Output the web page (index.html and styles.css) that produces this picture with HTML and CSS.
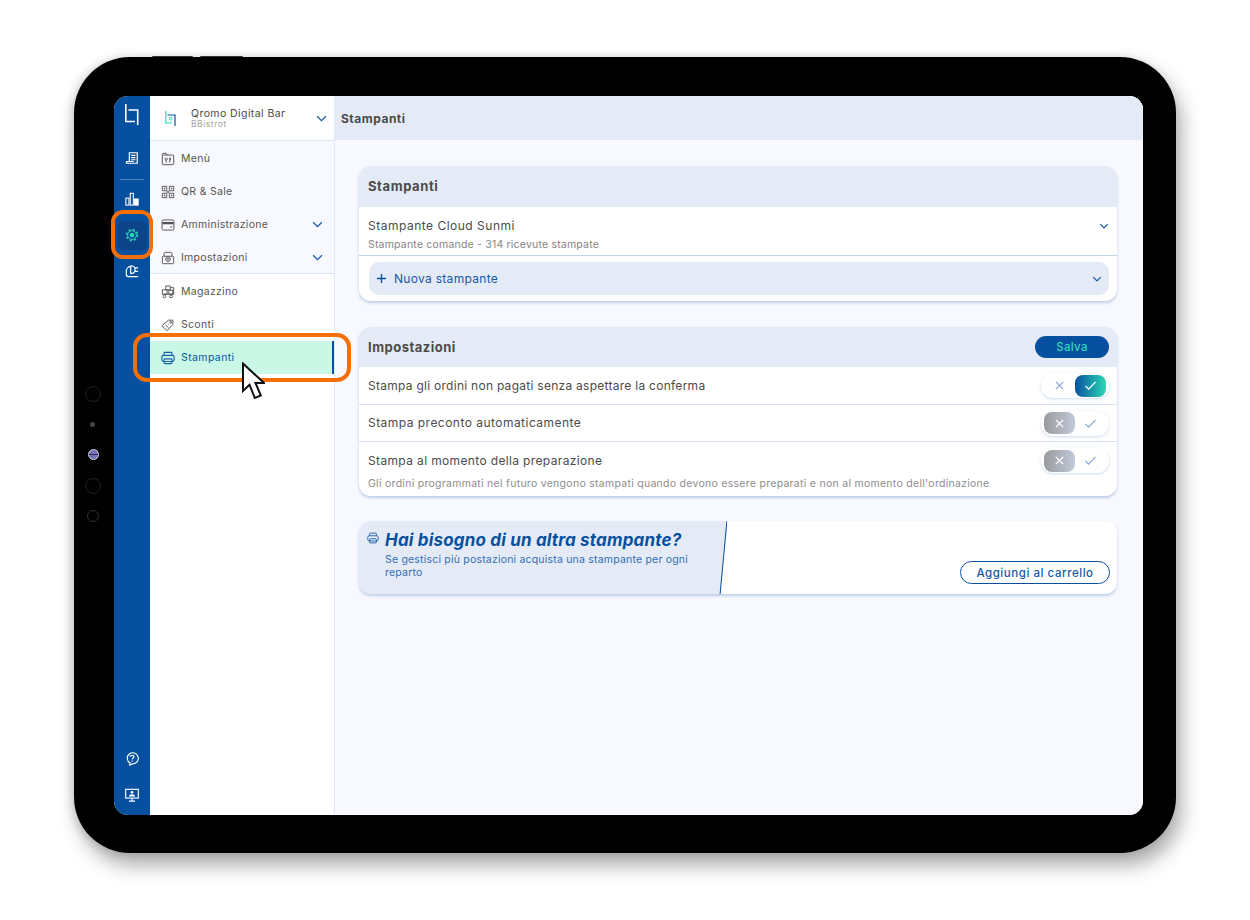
FILE: index.html
```html
<!DOCTYPE html>
<html lang="it">
<head>
<meta charset="utf-8">
<title>Stampanti</title>
<link rel="stylesheet" href="styles.css">
</head>
<body>
<div class="stage">
  <div class="device">
    <span class="hw-btn hw-btn-a"></span>
    <span class="hw-btn hw-btn-b"></span>
    <span class="lens lens-a"></span>
    <span class="lens lens-b"></span>
    <span class="lens lens-c"></span>
    <span class="lens lens-d"></span>
    <span class="lens lens-e"></span>

    <div class="screen">
      <aside class="rail">
        <div class="rail-item">
          <svg class="rail-logo" viewBox="0 0 14 21" fill="none" stroke="#fff" stroke-width="1.600"><path d="M.8 0v17.500H10"/><path d="M3.500 6h9.200v15"/></svg>
        </div>
        <div class="rail-item">
          <svg class="rail-ic" viewBox="0 0 16 16" fill="none" stroke="#fff" stroke-width="1.400"><path d="M5 12V2h9v12H2.500c-1.300 0-1.300-2 0-2H10"/><path d="M7 5h5M7 7.500h5M7 10h5"/></svg>
        </div>
        <div class="rail-sep"></div>
        <div class="rail-item">
          <svg class="rail-ic" viewBox="0 0 16 16" fill="none" stroke="#fff" stroke-width="1.200"><rect x="1" y="7" width="3.500" height="8"/><rect x="6" y="1.500" width="3.500" height="13.500"/><rect x="11" y="8" width="4" height="7" fill="#fff"/></svg>
        </div>
        <div class="rail-item">
          <span class="rail-active">
            <svg class="rail-ic" viewBox="0 0 16 16" fill="none" stroke="#2ad9b5"><circle cx="8" cy="8" r="5" stroke-width="1.100"/><circle cx="8" cy="8" r="6.300" stroke-width="1.600" stroke-dasharray="2.400 2.550"/><circle cx="8" cy="8" r="2.600" fill="#2ad9b5" stroke="none"/></svg>
          </span>
        </div>
        <div class="rail-item">
          <svg class="rail-ic" viewBox="0 0 16 16" fill="none" stroke="#fff" stroke-width="1.400"><path d="M6.500 2.800A5.500 5.500 0 0 0 1.500 8.500V12c0 1.300.8 2.300 2.200 2.300H15"/><path d="M6.500 2v9M6.500 2c3.500 0 5 1.800 5 4.500S10 11 6.500 11M11.500 4.500H15M11.500 8.500H15"/></svg>
        </div>
        <div class="rail-item rail-push">
          <svg class="rail-ic" viewBox="0 0 16 16" fill="none" stroke="#fff" stroke-width="1.300"><path d="M5.500 15l.3-2.300A6.300 6.300 0 1 1 8.500 13.500z"/><path d="M6 5.500C6 3.300 10.200 3.300 10.200 5.500c0 1.700-2.100 1.500-2.100 3.200M8.100 9.800v1.200"/></svg>
        </div>
        <div class="rail-item">
          <svg class="rail-ic" viewBox="0 0 16 16" fill="none" stroke="#fff" stroke-width="1.300"><rect x=".8" y="1.500" width="14.400" height="10"/><path d="M4.500 15h7M8 11.500V15"/><circle cx="8" cy="4.800" r="1.500" fill="#fff" stroke="none"/><path d="M4.500 9.800c0-3.600 7-3.600 7 0z" fill="#fff" stroke="none"/></svg>
        </div>
      </aside>

      <nav class="nav">
        <div class="nav-head">
          <svg class="nav-logo" viewBox="0 0 11 15" fill="none" stroke-width="1.200"><path d="M.8 0v12h6" stroke="#2ad9b5"/><path d="M2.500 4h7.500v11" stroke="#0a4fa0"/><path d="M4.500 6.500h2.500V9H4.500z" stroke="#2ad9b5" stroke-width=".8"/></svg>
          <div class="nav-head-text">
            <div class="venue">Qromo Digital Bar</div>
            <div class="venue-sub">BBistrot</div>
          </div>
          <svg class="chev chev-head" viewBox="0 0 12 8"><path d="M1 1.500l5 5 5-5"/></svg>
        </div>

        <div class="nav-group">
          <div class="nav-item">
            <svg class="nav-ic" viewBox="0 0 16 16"><path d="M2.500 3.500h11c.6 0 1 .4 1 1v9c0 .6-.4 1-1 1h-11c-.6 0-1-.4-1-1v-11c0-.6.400-1 1-1H6l1 2"/><path d="M4.800 6.500v2c0 1 2.200 1 2.200 0v-2M5.900 9v3M10 6.500V12M10 6.500c1.500.5 1.500 2.500 0 3"/></svg>
            <span>Menù</span>
          </div>
          <div class="nav-item">
            <svg class="nav-ic" viewBox="0 0 16 16"><path d="M1.500 1.500h5v5h-5zM9.500 1.500h5v5h-5zM1.500 9.500h5v5h-5zM9.500 9.500h5v5h-5z"/><path class="ic-thick" d="M3.300 4h1.500M11.300 4h1.500M3.300 12h1.500M11.300 12h1.500M6.500 8h3"/></svg>
            <span>QR &amp; Sale</span>
          </div>
          <div class="nav-item">
            <svg class="nav-ic" viewBox="0 0 16 16"><rect x="1.200" y="2.200" width="13.600" height="11.600" rx="1.500"/><path class="ic-wide" d="M1.500 5.800h13"/><path d="M10.500 10.300h2.500"/></svg>
            <span>Amministrazione</span>
            <svg class="chev chev-item" viewBox="0 0 12 8"><path d="M1 1.500l5 5 5-5"/></svg>
          </div>
          <div class="nav-item">
            <svg class="nav-ic" viewBox="0 0 16 16"><path d="M2.500 6h11c.6 0 1 .4 1 1v6.500c0 .6-.4 1-1 1h-11c-.6 0-1-.4-1-1V7c0-.6.4-1 1-1z"/><path d="M3.500 6V3c0-.8.5-1.500 1.500-1.500h6c1 0 1.500.7 1.500 1.500v3"/><path d="M8 6.500l2.500 1.500v2.700L8 12.300 5.500 10.700V8z"/><circle cx="8" cy="9.400" r=".8"/></svg>
            <span>Impostazioni</span>
            <svg class="chev chev-item" viewBox="0 0 12 8"><path d="M1 1.500l5 5 5-5"/></svg>
          </div>
        </div>

        <div class="nav-group-sub">
          <div class="nav-item">
            <svg class="nav-ic" viewBox="0 0 16 16"><rect x="1.500" y="5.500" width="5.500" height="5"/><rect x="5.500" y="1.200" width="5" height="4.300"/><path d="M10.500 3h4v7.500H3"/><rect x="9" y="6" width="4.500" height="4.500"/><circle cx="4" cy="13" r="1.600"/><circle cx="11.500" cy="13" r="1.600"/></svg>
            <span>Magazzino</span>
          </div>
          <div class="nav-item">
            <svg class="nav-ic" viewBox="0 0 16 16"><path d="M8.500 2.500h5V7.500L7 14.500 1 8.800z"/><circle cx="11" cy="5" r="1"/><path d="M5 8l3.500 3M7.500 6.500l1 1"/></svg>
            <span>Sconti</span>
          </div>
          <div class="nav-item nav-item-on">
            <svg class="nav-ic nav-ic-on" viewBox="0 0 16 16"><path d="M3.500 5V2.500c0-.6.4-1 1-1h7c.6 0 1 .4 1 1V5"/><rect x="1" y="5" width="14" height="7" rx="2.200"/><rect x="3.500" y="9" width="9" height="5.500" rx="1"/></svg>
            <span>Stampanti</span>
          </div>
        </div>
      </nav>

      <main class="main">
        <header class="topbar">Stampanti</header>
        <div class="content">
          <section class="card">
            <div class="card-head">Stampanti</div>
            <div class="printer-row">
              <div>
                <div class="row-title printer-name">Stampante Cloud Sunmi</div>
                <div class="row-sub">Stampante comande - 314 ricevute stampate</div>
              </div>
              <svg class="chev chev-row" viewBox="0 0 12 8"><path d="M1 1.500l5 5 5-5"/></svg>
            </div>
            <div class="new-wrap">
              <div class="new-bar">
                <svg class="plus" viewBox="0 0 12 12"><path d="M6 1v10M1 6h10"/></svg>
                <span>Nuova stampante</span>
                <svg class="chev chev-new" viewBox="0 0 12 8"><path d="M1 1.500l5 5 5-5"/></svg>
              </div>
            </div>
          </section>

          <section class="card">
            <div class="card-head card-head-set">
              <span>Impostazioni</span>
              <button class="save">Salva</button>
            </div>
            <div class="set-row set-row-a">
              <span class="row-title">Stampa gli ordini non pagati senza aspettare la conferma</span>
              <div class="toggle toggle-on">
                <span class="tg tg-x"><svg viewBox="0 0 12 12"><path d="M2 2l8 8M10 2l-8 8"/></svg></span>
                <span class="tg tg-v"><svg viewBox="0 0 14 12"><path d="M1.500 6.500L5 10l7.500-8"/></svg></span>
              </div>
            </div>
            <div class="set-row set-row-b">
              <span class="row-title">Stampa preconto automaticamente</span>
              <div class="toggle toggle-off">
                <span class="tg tg-x"><svg viewBox="0 0 12 12"><path d="M2 2l8 8M10 2l-8 8"/></svg></span>
                <span class="tg tg-v"><svg viewBox="0 0 14 12"><path d="M1.500 6.500L5 10l7.500-8"/></svg></span>
              </div>
            </div>
            <div class="set-row-c">
              <div class="set-row-c-top">
                <span class="row-title">Stampa al momento della preparazione</span>
                <div class="toggle toggle-off">
                  <span class="tg tg-x"><svg viewBox="0 0 12 12"><path d="M2 2l8 8M10 2l-8 8"/></svg></span>
                  <span class="tg tg-v"><svg viewBox="0 0 14 12"><path d="M1.500 6.500L5 10l7.500-8"/></svg></span>
                </div>
              </div>
              <div class="row-note">Gli ordini programmati nel futuro vengono stampati quando devono essere preparati e non al momento dell'ordinazione</div>
            </div>
          </section>

          <section class="card promo">
            <div class="promo-left">
              <svg class="promo-ic" viewBox="0 0 16 16"><path d="M3.500 5V2.500c0-.6.4-1 1-1h7c.6 0 1 .4 1 1V5"/><rect x="1" y="5" width="14" height="7" rx="2.200"/><rect x="3.500" y="9" width="9" height="5.500" rx="1"/></svg>
              <div class="promo-text">
                <div class="promo-title">Hai bisogno di un altra stampante?</div>
                <div class="promo-sub">Se gestisci più postazioni acquista una stampante per ogni reparto</div>
              </div>
            </div>
            <button class="cart">Aggiungi al carrello</button>
          </section>
        </div>
      </main>
    </div>

    <span class="mark mark-rail"></span>
    <span class="mark mark-item"></span>
    <svg class="cursor" viewBox="0 0 24 38"><path d="M2 1.500V29l6.500-6.300L13.800 36l6-2.500-5.300-12.500h8.500z"/></svg>
  </div>
</div>
</body>
</html>
```
FILE: styles.css
```css
* { box-sizing: border-box; }
html, body { margin: 0; height: 100%; background: #fff; }
body { font-family: Inter, "Noto Sans", sans-serif; color: #4b4b4b; }

.stage { padding: 57px 74px; width: 1250px; height: 920px; overflow: hidden; }

.device {
  position: relative;
  width: 1102px;
  height: 796px;
  padding: 39px 33px 38px 40px;
  background: #000;
  border-radius: 56px;
  box-shadow: 5px 12px 20px rgba(0,0,0,.34), -3px 0 8px rgba(0,0,0,.12);
}
.hw-btn { position: absolute; top: -1px; height: 1px; background: #333; border-radius: 1px 1px 0 0; }
.hw-btn-a { left: 78px; width: 41px; }
.hw-btn-b { left: 126px; width: 43px; }

.lens { position: absolute; border-radius: 50%; border: 1px solid #222; }
.lens-a { top: 329px; left: 11px; width: 16px; height: 16px; }
.lens-b { top: 365px; left: 16px; width: 5px; height: 5px; background: #444; border: 0; }
.lens-c { top: 392px; left: 14px; width: 11px; height: 11px; background: linear-gradient(#7572b8 45%, #2c2a52 45%, #2c2a52 60%, #7572b8 60%); border: 1px solid #d5d5e0; }
.lens-d { top: 421px; left: 11px; width: 16px; height: 16px; }
.lens-e { top: 453px; left: 13px; width: 12px; height: 12px; border-color: #333; }

.screen {
  display: flex;
  width: 1029px;
  height: 719px;
  border-radius: 14px;
  overflow: hidden;
  background: #fff;
}

/* rail */
.rail { display: flex; flex-direction: column; width: 36px; padding-bottom: 2px; background: #07509f; flex: none; }
.rail-item { display: flex; align-items: center; justify-content: center; height: 36px; flex: none; }
.rail-item:first-child { height: 44px; padding-bottom: 8px; }
.rail-sep { height: 1px; margin: 3px 6px 1px; background: #4f83bd; flex: none; }
.rail-push { margin-top: auto; }
.rail-logo { width: 14px; height: 21px; }
.rail-ic { width: 14px; height: 14px; }
.rail-active { display: flex; align-items: center; justify-content: center; width: 29px; height: 29px; border-radius: 6px; background: #0b4489; }

/* nav */
.nav { display: flex; flex-direction: column; width: 185px; flex: none; background: #fff; border-right: 1px solid #e3e9f5; }
.nav-head { display: flex; align-items: center; height: 45px; padding: 0 7px 0 15px; border-bottom: 1px solid #dce5f3; }
.nav-logo { width: 11px; height: 15px; margin-right: 15px; flex: none; }
.nav-head-text { flex: 1; }
.venue { font-size: 10.500px; line-height: 13px; letter-spacing: .42px; color: #4b4b4b; }
.venue-sub { font-size: 8.500px; line-height: 9px; letter-spacing: .55px; color: #a5a5a5; }
.nav-group { height: 133px; padding-top: 1px; background: #f8f9fe; border-bottom: 1px solid #dce5f3; }
.nav-group-sub { padding-top: 1px; }
.nav-item { display: flex; align-items: center; height: 33px; padding: 0 10px 0 11px; font-size: 10.500px; letter-spacing: .3px; color: #555; }
.nav-item span { flex: 1; }
.nav-ic { width: 14px; height: 14px; margin-right: 6px; flex: none; fill: none; stroke: #555; stroke-width: 1.100; }
.ic-thick { stroke-width: 1.500; }
.ic-wide { stroke-width: 2.400; }
.nav-ic-on { stroke: #1a5fa8; stroke-width: 1.300; }
.nav-item-on { background: #c9f8e6; color: #0d55a3; border-right: 2px solid #0a4fa0; letter-spacing: .4px; }

.chev { fill: none; stroke: #1b5cab; stroke-width: 1.500; flex: none; }
.chev-head { width: 11px; height: 7px; }
.chev-item { width: 11px; height: 7px; margin-right: 1px; }
.chev-row { width: 10px; height: 6px; margin-top: 5px; stroke-width: 1.800; }
.chev-new { width: 10px; height: 6px; stroke-width: 1.800; }

/* main */
.main { display: flex; flex-direction: column; flex: 1; min-width: 0; background: #f8f9fe; }
.topbar { height: 44px; padding: 1px 0 0 6px; background: #e5ebf6; font-size: 12px; font-weight: 700; letter-spacing: .5px; line-height: 43px; color: #4b4b4b; flex: none; }
.content { display: flex; flex-direction: column; padding: 26px 26px 0 24px; }
.card { background: #fff; border-radius: 12px; box-shadow: 0 2px 3px rgba(10,79,160,.25); overflow: hidden; margin-bottom: 26px; }

.card-head { height: 41px; padding-left: 9px; background: #e5ebf6; font-size: 13px; font-weight: 700; line-height: 41px; color: #4b4b4b; letter-spacing: .6px; }
.card-head-set { display: flex; align-items: center; justify-content: space-between; height: 40px; padding-right: 8px; line-height: normal; letter-spacing: .5px; }

.printer-row { display: flex; align-items: flex-start; justify-content: space-between; height: 49px; padding: 11px 8px 0 9px; border-bottom: 1px solid #c3d3ea; }
.row-title { font-size: 12px; letter-spacing: .27px; color: #4b4b4b; line-height: 16px; }
.printer-name { letter-spacing: .5px; }
.set-row-b .row-title { letter-spacing: .47px; }
.set-row-c .row-title { letter-spacing: .36px; }
.row-sub { margin-top: 4px; font-size: 10.500px; letter-spacing: .2px; color: #858585; line-height: 13px; }

.new-wrap { padding: 6px 8px 6px 10px; }
.new-bar { display: flex; align-items: center; height: 33px; padding: 0 7px; border-radius: 10px; background: #e5ebf6; color: #1559a6; font-size: 12px; letter-spacing: .3px; }
.new-bar span { flex: 1; }
.plus { width: 11px; height: 11px; margin-right: 7px; fill: none; stroke: #0a4fa0; stroke-width: 1.500; flex: none; }

.save { width: 74px; height: 22px; padding: 0; border: 0; border-radius: 11px; background: #07509f; color: #2ad9b5; font: 500 11.500px Inter, sans-serif; letter-spacing: .3px; }

.set-row { display: flex; align-items: center; justify-content: space-between; padding: 0 8px 0 9px; border-bottom: 1px solid #d5e0f0; }
.set-row-a { height: 38px; }
.set-row-b { height: 37px; }
.set-row-c { padding: 0 8px 0 9px; height: 54px; }
.set-row-c-top { display: flex; align-items: center; justify-content: space-between; height: 37px; }
.row-note { font-size: 10.500px; letter-spacing: .28px; color: #8d8d8d; line-height: 12px; margin-top: -1px; }

.toggle { display: flex; align-items: center; width: 68px; height: 25px; padding: 0 3px; border-radius: 12px; background: #fff; box-shadow: 0 1px 3px rgba(90,130,190,.3); }
.tg { display: flex; align-items: center; justify-content: center; width: 31px; height: 22px; border-radius: 8px; }
.tg svg { width: 11px; height: 11px; fill: none; stroke: #8ea7d2; stroke-width: 1.300; }
.tg-v svg { width: 13px; }
.toggle-on { justify-content: space-between; }
.toggle-on .tg-v { width: 32px; background: linear-gradient(90deg, #07509f, #2ad9b5); }
.toggle-on .tg-v svg { stroke: #fff; stroke-width: 1.400; }
.toggle-off .tg-x { width: 32px; background: linear-gradient(90deg, #9a9a9e, #c0cad8); }
.toggle-off .tg-x svg { stroke: #fff; stroke-width: 1.400; }
.toggle-off .tg-v { margin-left: 1px; }

.promo { position: relative; display: flex; justify-content: flex-end; align-items: flex-end; height: 73px; margin-top: -1px; padding: 0 7px 10px 0; }
.promo-left { position: absolute; left: 0; top: 0; bottom: 0; width: 368px; display: flex; padding: 9px 0 0 8px; overflow: hidden; }
.promo-left::before { content: ""; position: absolute; left: -20px; top: 0; bottom: 0; right: 3px; background: #e5ebf6; border-right: 1px solid #0a4fa0; transform: skewX(-5.300deg); }
.promo-ic { position: relative; width: 12px; height: 12px; margin-right: 6px; margin-top: 2px; flex: none; fill: none; stroke: #1a5fa8; stroke-width: 1.200; }
.promo-text { position: relative; width: 315px; }
.promo-title { font-size: 17px; font-weight: 700; font-style: italic; line-height: 20px; letter-spacing: .18px; color: #07509f; white-space: nowrap; }
.promo-sub { margin-top: 3px; font-size: 10.500px; letter-spacing: .2px; line-height: 13px; color: #2f6fb3; }
.cart { position: relative; width: 150px; height: 23px; padding: 0; border: 1px solid #0a4fa0; border-radius: 12px; background: #fff; color: #1559a6; font: 500 11.500px Inter, sans-serif; letter-spacing: .55px; }

/* annotations over the app */
.mark { position: absolute; border: 4px solid #f56f08; pointer-events: none; }
.mark-rail { left: 37px; top: 153px; width: 42px; height: 49px; border-radius: 12px; }
.mark-item { left: 59px; top: 276px; width: 218px; height: 49px; border-radius: 14px; }
.cursor { position: absolute; left: 167px; top: 305px; width: 24px; height: 38px; fill: #fff; stroke: #111; stroke-width: 2; stroke-linejoin: miter; }
```
